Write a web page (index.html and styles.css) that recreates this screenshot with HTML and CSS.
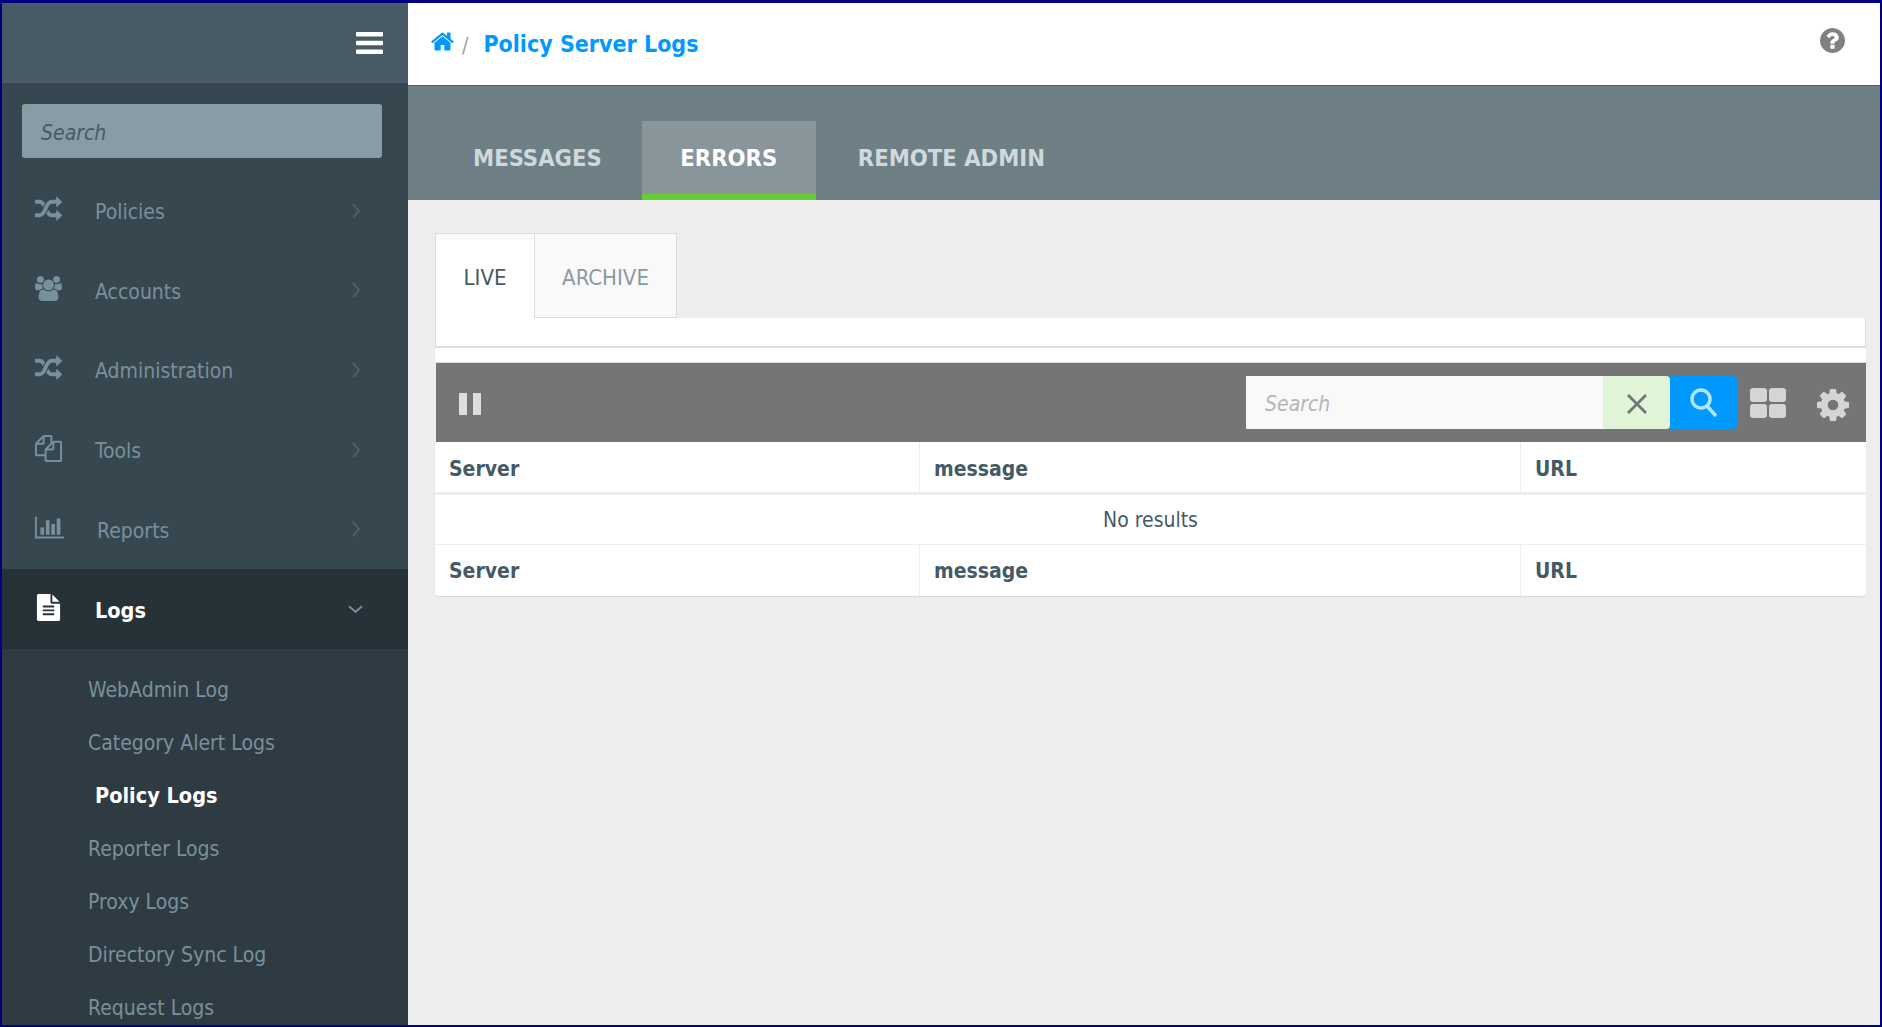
FILE: index.html
```html
<!DOCTYPE html>
<html>
<head>
    <meta charset="UTF-8">
    <title>Policy Server Logs</title>
    <link rel="stylesheet" href="styles.css">
</head>
<body>
<div class="app">
    <aside class="sidebar">
        <div class="sidebar-top">
            <svg class="burger" viewBox="0 0 27 22"><rect width="27" height="4.5" rx="1"/><rect y="8.7" width="27" height="4.5" rx="1"/><rect y="17.5" width="27" height="4.5" rx="1"/></svg>
        </div>
        <div class="sidebar-search">
            <input type="text" class="sidebar-input" placeholder="Search">
        </div>
        <nav class="nav">
            <a class="nav-item">
                <svg class="nav-icon" viewBox="0 0 1792 1792"><path d="M666 481q-60 92-137 273-22-45-37-72.5t-40.5-63.5-51-56.5-63-35-81.5-14.5h-224q-14 0-23-9t-9-23v-192q0-14 9-23t23-9h224q250 0 410 225zm1126 799q0 14-9 23l-320 320q-9 9-23 9-13 0-22.5-9.5t-9.5-22.5v-192q-32 0-85 .5t-81 1-73-1-71-5-64-10.5-63-18.5-58-28.5-59-40-55-53.5-56-69.5q59-93 136-273 22 45 37 72.5t40.5 63.5 51 56.5 63 35 81.5 14.5h256v-192q0-14 9-23t23-9q12 0 24 10l319 319q9 9 9 23zm0-896q0 14-9 23l-320 320q-9 9-23 9-13 0-22.5-9.5t-9.5-22.5v-192h-256q-48 0-87 15t-69 45-51 61.5-45 77.5q-32 62-78 171-29 66-49.5 111t-54 105-64 100-74 83-90 68.5-106.5 42-128 16.5h-224q-14 0-23-9t-9-23v-192q0-14 9-23t23-9h224q48 0 87-15t69-45 51-61.5 45-77.5q32-62 78-171 29-66 49.5-111t54-105 64-100 74-83 90-68.5 106.5-42 128-16.5h256v-192q0-14 9-23t23-9q12 0 24 10l319 319q9 9 9 23z"/></svg>
                <span class="nav-label">Policies</span>
                <svg class="chevron" viewBox="0 0 8 16"><path d="M1 1l6 7-6 7"/></svg>
            </a>
            <a class="nav-item">
                <svg class="nav-icon" viewBox="0 0 1920 1792"><path d="M593 896q-162 5-265 128h-134q-82 0-138-40.5t-56-118.5q0-353 124-353 6 0 43.5 21t97.5 42.5 119 21.5q67 0 133-23-5 37-5 66 0 139 81 256zm1071 637q0 120-73 189.5t-194 69.5h-874q-121 0-194-69.5t-73-189.5q0-53 3.5-103.5t14-109 26.5-108.5 43-97.5 62-81 85.5-53.5 111.5-20q10 0 43 21.5t73 48 107 48 135 21.5 135-21.5 107-48 73-48 43-21.5q61 0 111.5 20t85.5 53.5 62 81 43 97.5 26.5 108.5 14 109 3.5 103.5zm-1024-1277q0 106-75 181t-181 75-181-75-75-181 75-181 181-75 181 75 75 181zm704 384q0 159-112.5 271.5t-271.5 112.5-271.5-112.5-112.5-271.5 112.5-271.5 271.5-112.5 271.5 112.5 112.5 271.5zm576 225q0 78-56 118.5t-138 40.5h-134q-103-123-265-128 81-117 81-256 0-29-5-66 66 23 133 23 59 0 119-21.5t97.5-42.5 43.5-21q124 0 124 353zm-128-609q0 106-75 181t-181 75-181-75-75-181 75-181 181-75 181 75 75 181z"/></svg>
                <span class="nav-label">Accounts</span>
                <svg class="chevron" viewBox="0 0 8 16"><path d="M1 1l6 7-6 7"/></svg>
            </a>
            <a class="nav-item">
                <svg class="nav-icon" viewBox="0 0 1792 1792"><path d="M666 481q-60 92-137 273-22-45-37-72.5t-40.5-63.5-51-56.5-63-35-81.5-14.5h-224q-14 0-23-9t-9-23v-192q0-14 9-23t23-9h224q250 0 410 225zm1126 799q0 14-9 23l-320 320q-9 9-23 9-13 0-22.5-9.5t-9.5-22.5v-192q-32 0-85 .5t-81 1-73-1-71-5-64-10.5-63-18.5-58-28.5-59-40-55-53.5-56-69.5q59-93 136-273 22 45 37 72.5t40.5 63.5 51 56.5 63 35 81.5 14.5h256v-192q0-14 9-23t23-9q12 0 24 10l319 319q9 9 9 23zm0-896q0 14-9 23l-320 320q-9 9-23 9-13 0-22.5-9.5t-9.5-22.5v-192h-256q-48 0-87 15t-69 45-51 61.5-45 77.5q-32 62-78 171-29 66-49.5 111t-54 105-64 100-74 83-90 68.5-106.5 42-128 16.5h-224q-14 0-23-9t-9-23v-192q0-14 9-23t23-9h224q48 0 87-15t69-45 51-61.5 45-77.5q32-62 78-171 29-66 49.5-111t54-105 64-100 74-83 90-68.5 106.5-42 128-16.5h256v-192q0-14 9-23t23-9q12 0 24 10l319 319q9 9 9 23z"/></svg>
                <span class="nav-label">Administration</span>
                <svg class="chevron" viewBox="0 0 8 16"><path d="M1 1l6 7-6 7"/></svg>
            </a>
            <a class="nav-item">
                <svg class="nav-icon" viewBox="0 0 1792 1792"><path d="M1696 384q40 0 68 28t28 68v1216q0 40-28 68t-68 28h-960q-40 0-68-28t-28-68v-288h-544q-40 0-68-28t-28-68v-672q0-40 20-88t48-76l408-408q28-28 76-48t88-20h416q40 0 68 28t28 68v328q68-40 128-40h416zm-544 213l-299 299h299v-299zm-640-384l-299 299h299v-299zm196 647l316-316v-416h-384v416q0 40-28 68t-68 28h-416v640h512v-256q0-40 20-88t48-76zm956 804v-1152h-384v416q0 40-28 68t-68 28h-416v640h896z"/></svg>
                <span class="nav-label">Tools</span>
                <svg class="chevron" viewBox="0 0 8 16"><path d="M1 1l6 7-6 7"/></svg>
            </a>
            <a class="nav-item">
                <svg class="nav-icon nav-icon-wide" viewBox="0 0 2048 1792"><path d="M640 896v512h-256v-512h256zm384-512v1024h-256v-1024h256zm1024 1152v128h-2048v-1536h128v1408h1920zm-640-896v768h-256v-768h256zm384-384v1152h-256v-1152h256z"/></svg>
                <span class="nav-label">Reports</span>
                <svg class="chevron" viewBox="0 0 8 16"><path d="M1 1l6 7-6 7"/></svg>
            </a>
            <a class="nav-item nav-item-open">
                <svg class="nav-icon" viewBox="0 0 1792 1792"><path d="M1596 476q14 14 28 36h-472v-472q22 14 36 28zm-476 164h544v1056q0 40-28 68t-68 28h-1344q-40 0-68-28t-28-68v-1600q0-40 28-68t68-28h800v544q0 40 28 68t68 28zm160 736v-64q0-14-9-23t-23-9h-704q-14 0-23 9t-9 23v64q0 14 9 23t23 9h704q14 0 23-9t9-23zm0-256v-64q0-14-9-23t-23-9h-704q-14 0-23 9t-9 23v64q0 14 9 23t23 9h704q14 0 23-9t9-23zm0-256v-64q0-14-9-23t-23-9h-704q-14 0-23 9t-9 23v64q0 14 9 23t23 9h704q14 0 23-9t9-23z"/></svg>
                <span class="nav-label">Logs</span>
                <svg class="chevron-down" viewBox="0 0 16 8"><path d="M1 1l7 6 7-6"/></svg>
            </a>
            <div class="subnav">
                <a class="sub-item">WebAdmin Log</a>
                <a class="sub-item">Category Alert Logs</a>
                <a class="sub-item sub-item-active">Policy Logs</a>
                <a class="sub-item">Reporter Logs</a>
                <a class="sub-item">Proxy Logs</a>
                <a class="sub-item">Directory Sync Log</a>
                <a class="sub-item">Request Logs</a>
            </div>
        </nav>
    </aside>

    <main class="main">
        <header class="topbar">
            <svg class="home-icon" viewBox="0 0 1792 1792"><path d="M1472 992v480q0 26-19 45t-45 19h-384v-384h-256v384h-384q-26 0-45-19t-19-45v-480q0-1 .5-3t.5-3l575-474 575 474q1 2 1 6zm223-69l-62 74q-8 9-21 11h-3q-13 0-21-7l-692-577-692 577q-12 8-24 7-13-2-21-11l-62-74q-8-10-7-23.5t11-21.5l719-599q32-26 76-26t76 26l244 204v-195q0-14 9-23t23-9h192q14 0 23 9t9 23v408l219 182q10 8 11 21.5t-7 23.5z"/></svg>
            <span class="crumb-sep">/</span>
            <h1 class="page-title">Policy Server Logs</h1>
            <svg class="help-icon" viewBox="128 128 1536 1536"><path d="M1024 1376v-192q0-14-9-23t-23-9h-192q-14 0-23 9t-9 23v192q0 14 9 23t23 9h192q14 0 23-9t9-23zm256-672q0-88-55.5-163t-138.5-116-170-41q-243 0-371 213-15 24 8 42l132 100q7 6 19 6 16 0 25-12 53-68 86-92 34-24 86-24 48 0 85.5 26t37.5 59q0 38-20 61t-68 45q-63 28-115.5 86.5t-52.5 125.5v36q0 14 9 23t23 9h192q14 0 23-9t9-23q0-19 21.5-49.5t54.5-49.5q32-18 49-28.5t46-35 44.5-48 28-60.5 12.5-81zm384 192q0 209-103 385.5t-279.5 279.5-385.5 103-385.5-103-279.5-279.5-103-385.5 103-385.5 279.5-279.5 385.5-103 385.5 103 279.5 279.5 103 385.5z"/></svg>
        </header>

        <div class="tab-band">
            <a class="band-tab band-messages">MESSAGES</a>
            <a class="band-tab band-errors">ERRORS</a>
            <a class="band-tab band-remote">REMOTE ADMIN</a>
        </div>

        <div class="content">
            <div class="sub-tabs">
                <a class="sub-tab sub-tab-live">LIVE</a>
                <a class="sub-tab sub-tab-archive">ARCHIVE</a>
            </div>
            <div class="tab-panel"></div>
            <div class="panel-gap"></div>

            <div class="toolbar">
                <svg class="pause-icon" viewBox="0 0 22 22"><rect width="8" height="22"/><rect x="14" width="8" height="22"/></svg>
                <div class="search-group">
                    <input type="text" class="search-box" placeholder="Search">
                    <button class="clear-btn"><svg viewBox="0 0 22 22"><path d="M2 2l18 18M20 2L2 20"/></svg></button>
                    <button class="search-btn"><svg viewBox="0 0 28 30"><circle cx="11" cy="11" r="9"/><path d="M17 18l9 10"/></svg></button>
                </div>
                <svg class="grid-icon" viewBox="0 0 36 30"><rect width="17" height="14" rx="3"/><rect x="19" width="17" height="14" rx="3"/><rect y="16" width="17" height="14" rx="3"/><rect x="19" y="16" width="17" height="14" rx="3"/></svg>
                <svg class="gear-icon" viewBox="128 128 1536 1536"><path d="M1152 896q0-106-75-181t-181-75-181 75-75 181 75 181 181 75 181-75 75-181zm512-109v222q0 12-8 23t-20 13l-185 28q-19 54-39 91 35 50 107 138 10 12 10 25t-9 23q-27 37-99 108t-94 71q-12 0-26-9l-138-108q-44 23-91 38-16 136-29 186-7 28-36 28h-222q-14 0-24.5-8.5t-11.5-21.5l-28-184q-49-16-90-37l-141 107q-10 9-25 9-14 0-25-11-126-114-165-168-7-10-7-23 0-12 8-23 15-21 51-66.5t54-70.5q-27-50-41-99l-183-27q-13-2-21-12.5t-8-23.5v-222q0-12 8-23t19-13l186-28q14-46 39-92-40-57-107-138-10-12-10-24 0-10 9-23 26-36 98.5-107.5t94.5-71.5q13 0 26 10l138 107q44-23 91-38 16-136 29-186 7-28 36-28h222q14 0 24.5 8.5t11.5 21.5l28 184q49 16 90 37l142-107q9-9 24-9 13 0 25 10 129 119 165 170 7 8 7 22 0 12-8 23-15 21-51 66.5t-54 70.5q26 50 41 98l183 28q13 2 21 12.5t8 23.5z"/></svg>
            </div>

            <table class="log-table">
                <colgroup>
                    <col class="col-server">
                    <col class="col-message">
                    <col class="col-url">
                </colgroup>
                <thead>
                    <tr><th>Server</th><th>message</th><th>URL</th></tr>
                </thead>
                <tbody>
                    <tr><td colspan="3" class="no-results">No results</td></tr>
                </tbody>
                <tfoot>
                    <tr><th>Server</th><th>message</th><th>URL</th></tr>
                </tfoot>
            </table>
        </div>
    </main>
</div>
</body>
</html>
```

FILE: styles.css
```css
* {
    box-sizing: border-box;
}

html, body {
    margin: 0;
    height: 100%;
    overflow: hidden;
}

body {
    font-family: "DejaVu Sans Condensed", "DejaVu Sans", sans-serif;
    font-stretch: condensed;
    font-size: 21px;
    background: #000080;
}

.app {
    display: flex;
    height: 100%;
    border: 2px solid #000080;
    border-top-width: 3px;
    background: #ededed;
    overflow: hidden;
}

/* sidebar */
.sidebar {
    width: 406px;
    flex: none;
    background: #37474f;
    overflow: hidden;
}

.sidebar-top {
    height: 80px;
    background: #485b66;
    display: flex;
    align-items: center;
    justify-content: flex-end;
    padding: 0 25px 0 0;
}

.burger {
    width: 27px;
    height: 22px;
    fill: #fff;
}

.sidebar-search {
    padding: 21px 26px 13px 20px;
}

.sidebar-input {
    display: block;
    width: 100%;
    height: 54px;
    padding: 4px 19px 0;
    border: none;
    border-radius: 3px;
    background: #889ca5;
    font: italic 21px "DejaVu Sans Condensed", "DejaVu Sans", sans-serif;
    font-stretch: condensed;
}

.sidebar-input::placeholder {
    color: #455a64;
    opacity: 1;
}

.nav-item {
    display: flex;
    align-items: center;
    height: 79.6px;
    padding: 3px 48px 0 33px;
    color: #78909c;
}

.nav-icon {
    width: 27px;
    height: 27px;
    flex: none;
    fill: #78909c;
    margin-top: -6px;
}

.nav-icon-wide {
    width: 29px;
}

.nav-label {
    flex: 1;
    margin-left: 33px;
}

.chevron {
    width: 8px;
    height: 16px;
    margin-top: -3px;
    fill: none;
    stroke: #4f6570;
    stroke-width: 1.5;
}

.nav-item-open {
    background: #263238;
    color: #fff;
    font-size: 21.5px;
    font-weight: bold;
}

.nav-item-open .nav-icon {
    fill: #fff;
}

.chevron-down {
    width: 15px;
    height: 8px;
    margin-top: -3px;
    margin-right: -3px;
    fill: none;
    stroke: #78909c;
    stroke-width: 2;
}

.subnav {
    background: #2e3b43;
    padding: 15px 0 30px;
}

.sub-item {
    display: block;
    height: 53px;
    line-height: 53px;
    padding-left: 86px;
    color: #78909c;
}

.sub-item-active {
    padding-left: 93px;
    color: #fff;
    font-size: 21.5px;
    line-height: 51px;
    font-weight: bold;
}

/* main area */
.main {
    flex: 1;
    min-width: 0;
    display: flex;
    flex-direction: column;
}

.topbar {
    height: 83px;
    flex: none;
    display: flex;
    align-items: center;
    padding: 0 35px 1px 22px;
    background: #fff;
    border-bottom: 1px solid #4f5f67;
}

.home-icon {
    width: 25px;
    height: 25px;
    fill: #0099ff;
    margin-top: -4px;
}

.crumb-sep {
    margin: 4px 15px 0 7px;
    color: #9aa5ab;
    font-size: 21px;
}

.page-title {
    flex: 1;
    margin: 0;
    color: #0099ff;
    font-size: 23px;
    font-weight: bold;
}

.help-icon {
    width: 25px;
    height: 25px;
    fill: #808080;
    margin-top: -6px;
}

.tab-band {
    height: 114px;
    flex: none;
    display: flex;
    align-items: flex-end;
    padding-left: 26px;
    background: #6e7f86;
}

.band-tab {
    height: 79px;
    line-height: 75px;
    color: #cfd8dc;
    font-size: 23.6px;
    font-weight: bold;
    border-bottom: 6px solid transparent;
}

.band-messages {
    padding-right: 40px;
    padding-left: 39px;
}

.band-errors {
    width: 174px;
    text-align: center;
    background: #88959b;
    color: #fff;
    border-bottom-color: #66cc33;
}

.band-remote {
    padding-left: 42px;
}

.content {
    flex: 1;
    padding: 33px 14px 0 27px;
}

.sub-tabs {
    display: flex;
    height: 85px;
    font-size: 22px;
}

.sub-tab {
    border: 1px solid #dddddd;
    border-bottom: none;
    line-height: 88px;
    text-align: center;
}

.sub-tab-live {
    width: 99px;
    background: linear-gradient(#f9f9f9 6px, #fff 6px);
    border-right: none;
    color: #455a64;
}

.sub-tab-archive {
    width: 143px;
    background: #f9f9f9;
    color: #8a9aa2;
    border-bottom: 1px solid #dddddd;
}

.tab-panel {
    height: 30px;
    background: #fff;
    border-left: 1px solid #dddddd;
    border-right: 1px solid #dddddd;
    border-bottom: 2px solid #dddddd;
}

.panel-gap {
    height: 15px;
    background: #fff;
    border-bottom: 1px solid #dddddd;
}

.toolbar {
    height: 79px;
    margin-left: 1px;
    display: flex;
    align-items: center;
    padding: 0 17px 0 23px;
    background: #757575;
}

.pause-icon {
    width: 22px;
    height: 22px;
    fill: #dddddd;
    margin-top: 2px;
}

.search-group {
    display: flex;
    height: 53px;
    margin-left: auto;
}

.search-box {
    width: 357px;
    height: 100%;
    padding: 3px 19px 0;
    border: none;
    background: #f9f9f9;
    font: italic 21px "DejaVu Sans Condensed", "DejaVu Sans", sans-serif;
    font-stretch: condensed;
}

.search-box::placeholder {
    color: #b5b5b5;
    opacity: 1;
}

.clear-btn {
    width: 67px;
    padding: 2px 0 0;
    border: none;
    border-radius: 0 4px 4px 0;
    background: #e0f4d8;
}

.clear-btn svg {
    display: block;
    width: 22px;
    height: 22px;
    margin: 0 auto;
    fill: none;
    stroke: #757575;
    stroke-width: 2.8;
}

.search-btn {
    width: 67px;
    padding: 1px 0 0;
    border: none;
    border-radius: 0 4px 4px 0;
    background: #0099ff;
}

.search-btn svg {
    display: block;
    width: 28px;
    height: 30px;
    margin: 0 auto;
    fill: none;
    stroke: #b3e5fc;
    stroke-width: 3.5;
}

.grid-icon {
    width: 36px;
    height: 30px;
    margin-left: 13px;
    fill: #d5d5d5;
}

.gear-icon {
    width: 32px;
    height: 32px;
    margin-left: 31px;
    margin-top: 4px;
    fill: #d5d5d5;
}

.log-table {
    width: 100%;
    table-layout: fixed;
    border-collapse: separate;
    border-spacing: 0;
    background: #fff;
    border-radius: 0 0 4px 4px;
    box-shadow: 0 1px 1px #d5dadb;
    color: #455a64;
}

.col-server {
    width: 484px;
}

.col-message {
    width: 601px;
}

.log-table th {
    height: 51px;
    padding: 0 14px;
    text-align: left;
    font-weight: bold;
    font-size: 21px;
    border-left: 1px solid #eeeeee;
}

.log-table th:first-child {
    border-left: none;
}

.log-table thead th {
    height: 53px;
    padding-top: 3px;
    border-bottom: 3px solid #eeeeee;
}

.no-results {
    height: 50px;
    padding-top: 1px;
    text-align: center;
    border-bottom: 1px solid #eeeeee;
}
```
